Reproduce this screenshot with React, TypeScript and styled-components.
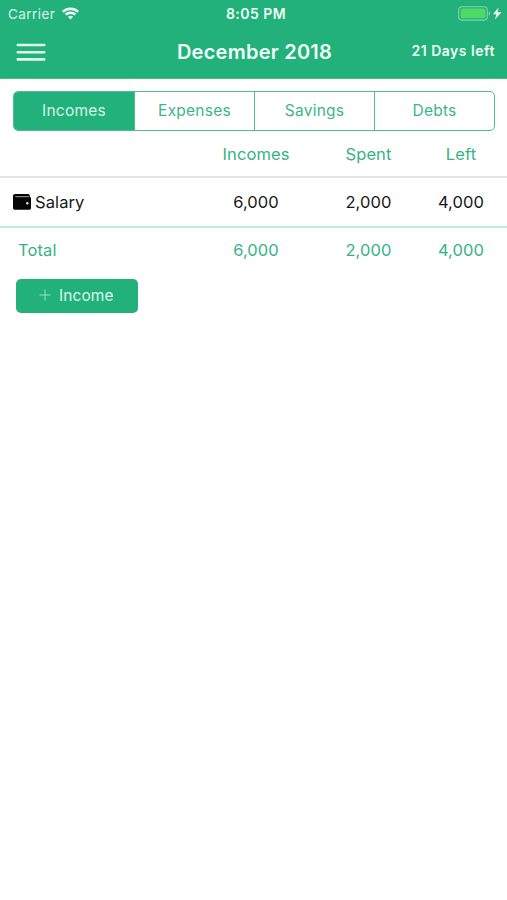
import React from 'react';
import styled, { createGlobalStyle } from 'styled-components';

const green = '#22b07b';

const GlobalStyle = createGlobalStyle`
  * { box-sizing: border-box; }
  body {
    margin: 0;
    background: #fefffe;
    font-family: Inter, "Liberation Sans", sans-serif;
    font-weight: 400;
  }
  svg { display: block; }
`;

const Screen = styled.main`
  display: flex;
  flex-direction: column;
  min-height: 900px;
  overflow: hidden;
`;

const Header = styled.header`
  height: 79px;
  background: ${green};
  color: #effff7;
  border-bottom: 1px solid #43bd90;
`;

const StatusBar = styled.div`
  display: grid;
  grid-template-columns: 1fr auto 1fr;
  align-items: center;
  height: 27px;
  padding: 0 5px 0 8px;
`;

const Carrier = styled.div`
  display: flex;
  align-items: center;
  gap: 7px;
  font-size: 13.5px;
  letter-spacing: 0.45px;
  color: #d9f8e9;
`;

const Clock = styled.div`
  margin-left: 2px;
  font-size: 14px;
  font-weight: 600;
  letter-spacing: 0.45px;
`;

const Power = styled.div`
  display: flex;
  justify-content: flex-end;
`;

const NavBar = styled.div`
  display: grid;
  grid-template-columns: 1fr auto 1fr;
  align-items: center;
  height: 50px;
  padding: 0 12px 0 16px;
`;

const MenuButton = styled.button`
  display: flex;
  width: 30px;
  padding: 0;
  border: 0;
  background: none;
`;

const Title = styled.h1`
  margin: 0 2px 0 0;
  font-size: 20px;
  font-weight: 600;
  letter-spacing: 0.25px;
  line-height: 24px;
`;

const DaysLeft = styled.div`
  justify-self: end;
  margin-bottom: 3px;
  font-size: 14px;
  font-weight: 600;
  letter-spacing: 0.52px;
`;

const Segments = styled.nav`
  display: grid;
  grid-template-columns: 121px 120px 120px 1fr;
  height: 40px;
  margin: 12px 12px 0 13px;
  border: 1.5px solid #50bd93;
  border-radius: 5px;
  overflow: hidden;
`;

const Segment = styled.button<{ $active?: boolean }>`
  padding: 0 0 2px;
  border: 0;
  border-right: 1px solid #50bd93;
  background: ${(p) => (p.$active ? green : 'transparent')};
  color: ${(p) => (p.$active ? '#d5f7e7' : '#40b587')};
  font: inherit;
  font-size: 15.5px;
  letter-spacing: 0.25px;
  &:last-child { border-right: 0; }
`;

const Row = styled.div<{ $height: number; $color: string; $line?: string }>`
  display: grid;
  grid-template-columns: 200px 112px 113px 72px;
  align-items: center;
  height: ${(p) => p.$height}px;
  color: ${(p) => p.$color};
  border-bottom: ${(p) => (p.$line ? `2px solid ${p.$line}` : '0')};
  font-size: 16.5px;
  letter-spacing: 0.1px;
`;

const Cell = styled.div`
  text-align: center;
  white-space: nowrap;
`;

const Label = styled.div<{ $inset: number }>`
  display: flex;
  align-items: center;
  gap: 4px;
  padding-left: ${(p) => p.$inset}px;
`;

const AddButton = styled.button`
  display: flex;
  align-items: center;
  align-self: flex-start;
  gap: 8px;
  width: 122.5px;
  height: 34.5px;
  margin: 6.5px 0 0 15.5px;
  padding: 0 0 1px 23.5px;
  border: 0;
  border-radius: 5px;
  background: ${green};
  color: #dcf9ea;
  font: inherit;
  font-size: 15.5px;
  letter-spacing: 0.1px;
`;

const MenuIcon = () => (
  <svg width="30" height="18" viewBox="0 0 30 18" stroke="#e2fbef" strokeWidth="2.6" strokeLinecap="round">
    <path d="M1.800 2h26.400M1.800 9.200h26.400M1.800 16.400h26.400" />
  </svg>
);

const WifiIcon = () => (
  <svg width="17" height="13" viewBox="0 0 17 13" fill="none" stroke="#effff7" strokeWidth="2.4">
    <path d="M.9 4.8C5.1.7 11.9.7 16.1 4.8" />
    <path d="M3.7 7.7c2.7-2.6 6.9-2.6 9.6 0" />
    <path d="M8.5 12.4 5.9 9.8c1.5-1.3 3.7-1.3 5.2 0z" fill="#effff7" stroke="none" />
  </svg>
);

const BatteryIcon = () => (
  <svg width="44" height="15" viewBox="0 0 44 15">
    <rect x=".7" y=".7" width="28.6" height="13.4" rx="3.3" fill="none" stroke="#80d5ae" strokeWidth="1.1" />
    <rect x="2.6" y="2.5" width="24.8" height="9.8" rx="1.5" fill="#4cd964" />
    <path d="M30.8 5.2c1.8.7 1.8 3.8 0 4.5z" fill="#80d5ae" />
    <path d="M40.500 1.400 35 8.200h3.400L37 13.600l6.400-7.400h-3.700z" fill="#effff7" />
  </svg>
);

const WalletIcon = () => (
  <svg width="18" height="16" viewBox="0 0 18 16">
    <path d="M2.200 0h12.700c1.200 0 1.900.7 1.900 1.900v.8c.8.3 1.200 1 1.200 1.800v9.200c0 1.300-.8 2.100-2.100 2.100H2.100C.8 15.800 0 15 0 13.700V2.200C0 .8.800 0 2.200 0z" fill="#050505" />
    <path d="M2.800 2.600h12.700" stroke="#858585" strokeWidth="1.300" strokeLinecap="round" />
    <circle cx="14.300" cy="9.300" r="1.300" fill="#dedede" />
  </svg>
);

const PlusIcon = () => (
  <svg width="12" height="12" viewBox="0 0 12 12" stroke="#9be0c1" strokeWidth="1">
    <path d="M6 .5v11M.5 6h11" />
  </svg>
);

const tabs = ['Incomes', 'Expenses', 'Savings', 'Debts'];
const amounts = ['6,000', '2,000', '4,000'];

export default function App() {
  return (
    <>
      <GlobalStyle />
      <Screen>
        <Header>
          <StatusBar>
            <Carrier>Carrier <WifiIcon /></Carrier>
            <Clock>8:05 PM</Clock>
            <Power><BatteryIcon /></Power>
          </StatusBar>
          <NavBar>
            <MenuButton aria-label="Menu"><MenuIcon /></MenuButton>
            <Title>December 2018</Title>
            <DaysLeft>21 Days left</DaysLeft>
          </NavBar>
        </Header>
        <Segments>
          {tabs.map((tab, i) => <Segment key={tab} $active={i === 0}>{tab}</Segment>)}
        </Segments>
        <Row $height={47} $color="#38b283" $line="#e2e6e4">
          <Label $inset={18} />
          {['Incomes', 'Spent', 'Left'].map((name) => <Cell key={name}>{name}</Cell>)}
        </Row>
        <Row $height={50} $color="#171717" $line="#c3e9da">
          <Label $inset={13}><WalletIcon />Salary</Label>
          {amounts.map((amount) => <Cell key={amount}>{amount}</Cell>)}
        </Row>
        <Row $height={44} $color="#38b283">
          <Label $inset={18}>Total</Label>
          {amounts.map((amount) => <Cell key={amount}>{amount}</Cell>)}
        </Row>
        <AddButton><PlusIcon />Income</AddButton>
      </Screen>
    </>
  );
}
